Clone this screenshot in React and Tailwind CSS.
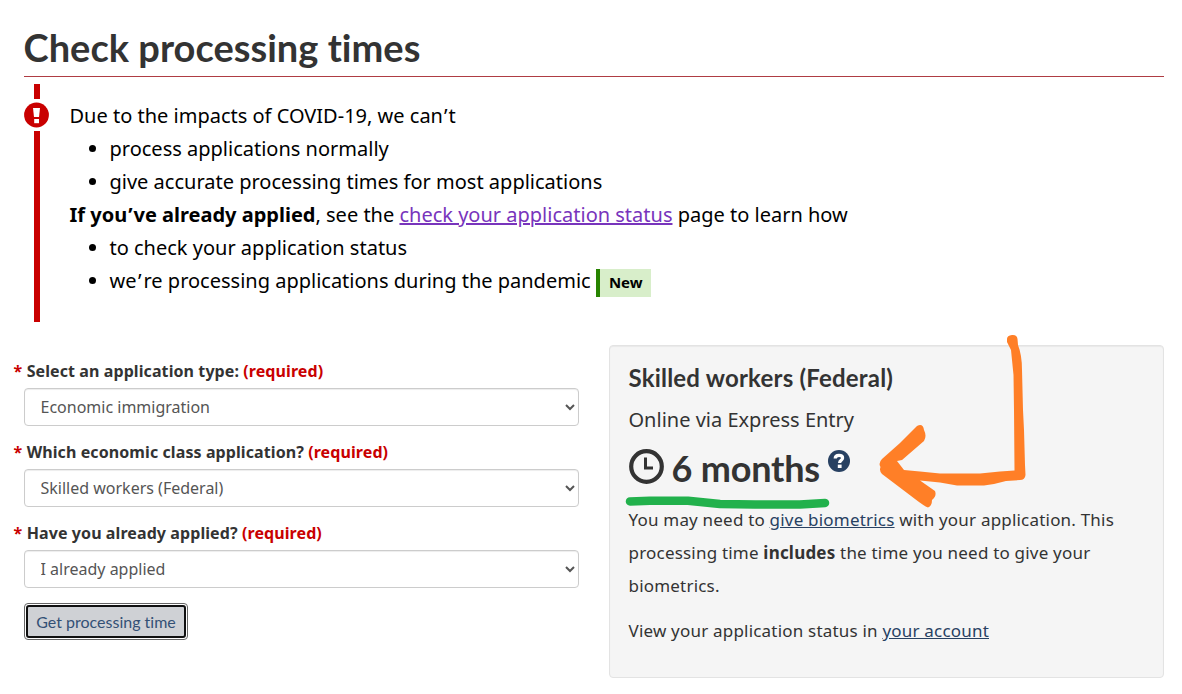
import React, { useState } from 'react'

const fields = [
  {
    id: 'type',
    label: 'Select an application type:',
    options: ['Economic immigration', 'Family sponsorship', 'Refugees'],
  },
  {
    id: 'class',
    label: 'Which economic class application?',
    options: ['Skilled workers (Federal)', 'Canadian Experience Class', 'Provincial nominees'],
  },
  {
    id: 'applied',
    label: 'Have you already applied?',
    options: ['I already applied', 'I have not applied yet'],
  },
]

const AlertIcon = () => (
  <svg className="block h-[26px] w-[26px]" viewBox="0 0 26 26" aria-hidden="true">
    <circle cx="12.5" cy="13" r="12.4" fill="#c90000" />
    <path d="M9 6h7l-1 9h-5z" fill="#fff" />
    <rect x="10.2" y="17" width="4.800" height="4.200" fill="#fff" />
  </svg>
)

const ClockIcon = () => (
  <svg className="block h-[35px] w-[35px]" viewBox="0 0 35 35" fill="none" stroke="#333" aria-hidden="true">
    <circle cx="17.5" cy="17.500" r="15.3" strokeWidth="4.200" />
    <path d="M16.500 8.500v11M15 19h9" strokeWidth="3" />
  </svg>
)

const HelpIcon = () => (
  <svg className="block h-[22px] w-[22px]" viewBox="0 0 22 22" fill="none" aria-hidden="true">
    <circle cx="11" cy="11" r="11" fill="#284162" />
    <path d="M7.200 8.6C7.200 6.200 8.700 5.400 11 5.400c2.400 0 3.600.9 3.600 2.600 0 2.400-3 2.300-3 5" stroke="#fff" strokeWidth="3.200" />
    <rect x="9.8" y="14.600" width="3.800" height="3.400" fill="#fff" />
  </svg>
)

const Apostrophe = () => <span className="mx-px">’</span>

const Field = ({ id, label, options }) => {
  const [value, setValue] = useState(options[0])

  return (
    <div className="mb-[14px]">
      <label htmlFor={id} className="-ml-[10.5px] flex h-[29px] items-center gap-[5px] pb-[6px] text-base font-bold text-[#333]">
        <span className="text-[#c90000]">*</span>
        <span className="-ml-[0.5px] tracking-[0.09px]">
          {label} <span className="text-[#c90000]">(required)</span>
        </span>
      </label>
      <select
        id={id}
        value={value}
        onChange={(e) => setValue(e.target.value)}
        className="block h-[38px] w-full rounded border border-[#ccc] bg-white py-1.5 pr-[13px] pl-[11.5px] text-base text-[#555] shadow-[inset_0_1px_1px_rgba(0,0,0,0.075)]"
      >
        {options.map((option) => (
          <option key={option}>{option}</option>
        ))}
      </select>
    </div>
  )
}

const Notice = () => (
  <section className="mt-[7px] flex h-[238px] text-xl leading-[33px] text-black">
    <div className="flex w-[26px] flex-col items-center">
      <div className="h-[15px] w-[6px] bg-[#c90000]" />
      <div className="my-[3px]">
        <AlertIcon />
      </div>
      <div className="w-[6px] flex-1 bg-[#c90000]" />
    </div>
    <div className="ml-[19.5px] pt-[15px]">
      <p>Due to the impacts of COVID-19, we can<Apostrophe />t</p>
      <ul className="list-disc pl-10">
        <li>process applications normally</li>
        <li>give accurate processing times for most applications</li>
      </ul>
      <p>
        <strong>If you<Apostrophe />ve already applied</strong>, see the{' '}
        <a href="#status" className="text-[#7834bc] underline">check your application status</a> page to learn how
      </p>
      <ul className="list-disc pl-10">
        <li>to check your application status</li>
        <li className="h-[33px]">
          we<span className="mr-[2px] ml-[1.5px]">’</span>re processing applications during the pandemic{' '}
          <span className="inline-block h-7 border-l-4 border-[#278400] bg-[#d8eeca] pr-2 pl-[9px] align-middle text-[15px] leading-[27px] font-bold">
            New
          </span>
        </li>
      </ul>
    </div>
  </section>
)

const Result = () => (
  <section className="relative h-[333px] w-[555px] rounded border border-[#e3e3e3] bg-[#f5f5f5] pt-[15px] pr-[15px] pl-[18.5px] text-[#333] shadow-[inset_0_1px_1px_rgba(0,0,0,0.05)]">
    <h2 className="font-[Lato,sans-serif] text-2xl leading-[34px] font-bold tracking-[0.2px]">Skilled workers (Federal)</h2>
    <p className="mt-2 text-xl leading-[33px]">Online via Express Entry</p>
    <div className="mt-2 flex h-[52px] items-start">
      <div className="mt-[5px]">
        <ClockIcon />
      </div>
      <p className="ml-2 font-[Lato,sans-serif] text-[36px] leading-[49px] font-bold tracking-[-0.2px]">6 months</p>
      <div className="mt-[6px] ml-2">
        <HelpIcon />
      </div>
    </div>
    <p className="mt-[7px] text-[17px] leading-[33px] tracking-[0.2px]">
      You may need to <a href="#biometrics" className="text-[#284162] underline">give biometrics</a> with your application. This processing time <strong>includes</strong> the time you need to give your biometrics.
    </p>
    <p className="mt-3 text-[17px] leading-[33px] tracking-[0.2px]">
      View your application status in <a href="#account" className="text-[#284162] underline">your account</a>
    </p>

    {/* Hand-drawn marks */}
    <svg
      className="pointer-events-none absolute -top-[16px] -left-px h-[190px] w-[440px]"
      viewBox="609 330 440 190"
      fill="none"
      strokeLinecap="round"
      strokeLinejoin="round"
      aria-hidden="true"
    >
      <path
        d="M630 501.5L650 500.8L688 500.8L720 504L755 504.5L800 504.5L825 503"
        stroke="#22b14c"
        strokeWidth="8.5"
      />
      <path
        d="M1007 339Q1007 335.5 1012 335Q1017 334.5 1017.5 339L1018 345Q1022 355 1022 370L1023 410L1024 430L1025 465L1025.5 475Q1025 480 1020 480L1006 481L994 484L984 485.5L957 485.5L940 482.5L920 480.5L935 491Q937 496 932 500Q932 506 928 507.5Q924 506 915 499L882 474Q879 471 880.5 467Q878 463 882 459L900 443L917 426Q923 423 924 430Q927 436 924 441L902 460L897 461L904 470L920 471.5L940 473.5L980 473.5L1000 471.5L1014.5 470.5L1014 410L1013.500 375L1011 350L1007 342Z"
        fill="#ff7f27"
      />
    </svg>
  </section>
)

export default function App() {
  return (
    <main className="h-[694px] w-full overflow-hidden bg-white pr-[18px] pl-6 font-['Noto_Sans',sans-serif] [font-variant-ligatures:none]">
      <h1 className="h-[77px] border-b border-[#af3c43] pt-[24px] font-[Lato,sans-serif] text-[38px] leading-[46px] font-bold text-[#333]">
        <span className="-ml-[0.5px] tracking-[0.02px]">Check processing times</span>
      </h1>
      <Notice />
      <div className="mt-[23px] flex items-start gap-[30px]">
        <form className="w-[555px] pt-[14px]" onSubmit={(e) => e.preventDefault()}>
          {fields.map((field) => (
            <Field key={field.id} {...field} />
          ))}
          <button
            type="submit"
            className="mt-[15px] block h-[37px] w-[164px] rounded border border-[#666] bg-white p-px"
          >
            <span className="flex h-full items-center justify-center rounded-[3px] border-2 border-[#101010] bg-[#cfd1d5] font-[Lato,sans-serif] text-base text-[#335075] [font-variant-ligatures:none]">
              Get processing time
            </span>
          </button>
        </form>
        <Result />
      </div>
    </main>
  )
}
